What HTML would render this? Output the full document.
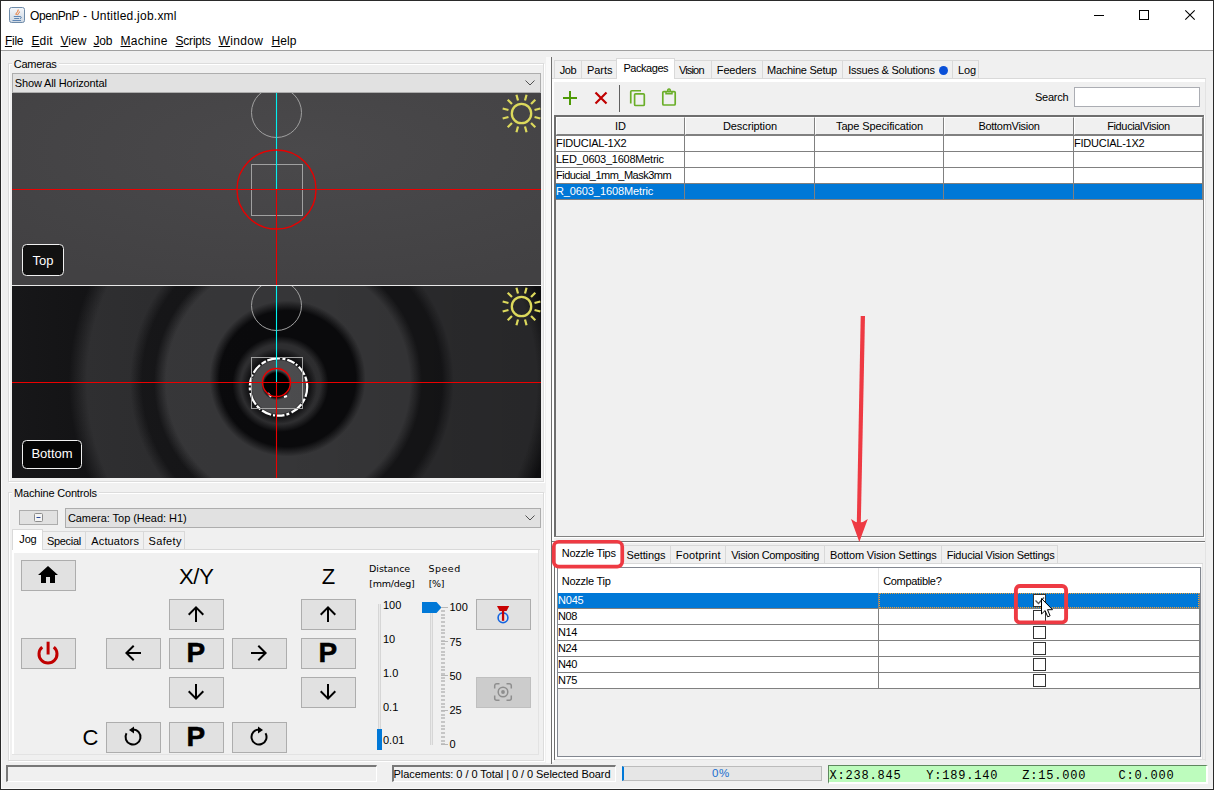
<!DOCTYPE html>
<html>
<head>
<meta charset="utf-8">
<title>OpenPnP - Untitled.job.xml</title>
<style>
html,body{margin:0;padding:0;}
body{width:1214px;height:790px;overflow:hidden;background:#262626;font-family:"Liberation Sans",sans-serif;font-size:11px;color:#000;position:relative;}
.a{position:absolute;box-sizing:border-box;}
.t{position:absolute;white-space:nowrap;line-height:14px;font-size:11px;}
#win{left:0;top:0;width:1214px;height:790px;border:1px solid #2a2a2a;background:#f0f0f0;box-shadow:inset 1px -1px 0 #fafafa;}
.menu{font-size:12px;line-height:16px;top:33px;}
.menu u{text-decoration:underline;text-underline-offset:1px;}
.grp{border:1px solid #dcdcdc;box-shadow:inset 1px 1px 0 #fff, 1px 1px 0 #fff;}
.combo{background:#e1e1e1;border:1px solid #adadad;}
.btn{background:#e1e1e1;border:1px solid #adadad;}
.tab{background:#f0f0f0;border:1px solid #d9d9d9;border-bottom:none;height:18px;}
.tabsel{background:#fff;border:1px solid #d9d9d9;border-bottom:none;height:21px;}
.cell{border-right:1px solid #808080;border-bottom:1px solid #808080;background:#fff;}
.pk{font-size:28px;line-height:32px;font-weight:bold;-webkit-text-stroke:0.5px #000;}
.sm{font-size:9.5px;font-family:"DejaVu Sans","Liberation Sans",sans-serif;}
.mono{font-family:"Liberation Mono",monospace;font-size:12px;letter-spacing:0.800px;line-height:16px;white-space:pre;}
.hd{height:18px;background:#f0f0f0;border:1px solid #808080;border-top-color:#fff;border-left-color:#fff;text-align:center;line-height:16px;font-size:11px;}
.rw{height:15px;background:#fff;line-height:15px;font-size:11px;white-space:nowrap;overflow:hidden;}
.sel{background:#0078d7;color:#fff;}
.cb{width:13px;height:13px;background:#fff;border:1px solid #333;}
</style>
</head>
<body>
<div class="a" id="win"></div>

<!-- title bar -->
<div class="a" style="left:1px;top:1px;width:1212px;height:50px;background:#fff;"></div>
<div class="a" style="left:1px;top:50px;width:1212px;height:1px;background:#a0a0a0;"></div>
<svg class="a" style="left:9px;top:7px;" width="16" height="16" viewBox="0 0 16 16">
 <defs><linearGradient id="jg" x1="0" y1="0" x2="0" y2="1"><stop offset="0" stop-color="#f4f7fb"/><stop offset="1" stop-color="#cdd7e2"/></linearGradient></defs>
 <rect x="0.5" y="0.5" width="15" height="15" rx="2" fill="url(#jg)" stroke="#6e8ba9"/>
 <path d="M7.200 8c-1.200-1.800 2.300-2.800 2-5.400M8.800 8.200c-0.600-1.300 1.800-2.200 1.700-3.600" fill="none" stroke="#ea6a1e" stroke-width="1"/>
 <path d="M4.800 9.500h6.200c1.800 0 1.800 2 0 2M5.200 11.500h5" stroke="#5f86b4" stroke-width="1" fill="none"/>
 <path d="M3.500 13.500h8.500" stroke="#5f86b4" stroke-width="1"/>
</svg>
<div class="t" style="left:30.0px;top:7px;font-size:12px;line-height:18px;letter-spacing:-0.42px;">OpenPnP</div><div class="t" style="left:83px;top:7px;font-size:12px;line-height:18px;">-</div><div class="t" style="left:90.9px;top:7px;font-size:12px;line-height:18px;letter-spacing:0.24px;">Untitled.job.xml</div>
<!-- window controls -->
<svg class="a" style="left:1080px;top:1px;" width="133" height="29" viewBox="0 0 133 29">
 <path d="M14 14.500h10" stroke="#000" stroke-width="1"/>
 <rect x="59.500" y="9.500" width="9" height="9" fill="none" stroke="#000" stroke-width="1"/>
 <path d="M105.300 9.300l9.400 9.400M114.700 9.300l-9.400 9.400" stroke="#000" stroke-width="1.100"/>
</svg>

<!-- menu -->
<div class="t menu" style="left:4.9px;letter-spacing:-0.25px;"><u>F</u>ile</div>
<div class="t menu" style="left:31.5px;letter-spacing:0.10px;"><u>E</u>dit</div>
<div class="t menu" style="left:60.5px;letter-spacing:0.06px;"><u>V</u>iew</div>
<div class="t menu" style="left:93.5px;letter-spacing:-0.18px;"><u>J</u>ob</div>
<div class="t menu" style="left:120.5px;letter-spacing:0.27px;"><u>M</u>achine</div>
<div class="t menu" style="left:175.5px;letter-spacing:-0.20px;"><u>S</u>cripts</div>
<div class="t menu" style="left:218.5px;letter-spacing:0.36px;"><u>W</u>indow</div>
<div class="t menu" style="left:271.5px;letter-spacing:0.10px;"><u>H</u>elp</div>

<!-- LEFT: cameras group -->
<div class="a grp" style="left:8px;top:63px;width:536px;height:419px;"></div>
<div class="t" style="left:11.8px;top:57px;background:#f0f0f0;padding:0 2px;letter-spacing:-0.27px;">Cameras</div>
<div class="a combo" style="left:12px;top:73px;width:529px;height:20px;"></div>
<div class="t" style="left:14.8px;top:76px;letter-spacing:-0.15px;">Show All Horizontal</div>
<svg class="a" style="left:524px;top:79px;" width="12" height="8" viewBox="0 0 12 8"><path d="M1.5 1.5l4.5 4.5l4.5-4.5" fill="none" stroke="#505050" stroke-width="1"/></svg>

<!-- CAMERAS -->
<svg class="a" id="camtop" style="left:12px;top:93px;" width="529" height="192" viewBox="0 0 529 192">
 <defs><radialGradient id="tg" cx="0.55" cy="0.3" r="0.75"><stop offset="0" stop-color="#4a494b"/><stop offset="1" stop-color="#424143"/></radialGradient></defs><rect width="529" height="192" fill="url(#tg)"/>
 <circle cx="264.5" cy="19.5" r="25" fill="none" stroke="#a0a0a0" stroke-width="1"/>
 <rect x="239.5" y="71.5" width="51" height="51" fill="none" stroke="#a0a0a0" stroke-width="1"/>
 <path d="M264.5 0V96.5" stroke="#00f0f0" stroke-width="1.100"/>
 <path d="M0 96.5H529M264.5 96.5V192" stroke="#ec0000" stroke-width="1.100"/>
 <circle cx="264.5" cy="96.5" r="39.5" fill="none" stroke="#e80000" stroke-width="1.400"/>
 <g transform="translate(509.5,20.5)" stroke="#dcd95c" fill="none" stroke-linecap="butt">
  <circle r="9.700" stroke-width="2.300"/>
  <g stroke-width="2.200">
   <path d="M0 -13.5V-19.5" transform="rotate(15)"/><path d="M0 -13.5V-19.5" transform="rotate(45)"/><path d="M0 -13.5V-19.5" transform="rotate(75)"/>
   <path d="M0 -13.5V-19.5" transform="rotate(105)"/><path d="M0 -13.5V-19.5" transform="rotate(135)"/><path d="M0 -13.5V-19.5" transform="rotate(165)"/>
   <path d="M0 -13.5V-19.5" transform="rotate(195)"/><path d="M0 -13.5V-19.5" transform="rotate(225)"/><path d="M0 -13.5V-19.5" transform="rotate(255)"/>
   <path d="M0 -13.5V-19.5" transform="rotate(285)"/><path d="M0 -13.5V-19.5" transform="rotate(315)"/><path d="M0 -13.5V-19.5" transform="rotate(345)"/>
  </g>
 </g>
 <rect x="10.500" y="151.500" width="41" height="31" rx="4" fill="#111" stroke="#f0f0f0" stroke-width="1"/>
 <text x="31" y="172.200" font-family="Liberation Sans, sans-serif" font-size="13" fill="#fff" text-anchor="middle">Top</text>
</svg>
<div class="a" style="left:12px;top:285px;width:529px;height:1px;background:#e8e8e8;"></div>
<svg class="a" id="cambot" style="left:12px;top:286px;" width="529" height="192" viewBox="0 0 529 192">
 <defs>
  <radialGradient id="d1" cx="300.0" cy="96.0" r="243.0" gradientUnits="userSpaceOnUse"><stop offset="0.926" stop-color="#2c2c2e"/><stop offset="0.963" stop-color="#2c2c2e" stop-opacity="0.5"/><stop offset="1" stop-color="#2c2c2e" stop-opacity="0"/></radialGradient>
  <radialGradient id="d2" cx="280.0" cy="96.0" r="162.0" gradientUnits="userSpaceOnUse"><stop offset="0.926" stop-color="#151517"/><stop offset="0.963" stop-color="#151517" stop-opacity="0.5"/><stop offset="1" stop-color="#151517" stop-opacity="0"/></radialGradient>
  <radialGradient id="d3" cx="276.0" cy="96.0" r="134.0" gradientUnits="userSpaceOnUse"><stop offset="0.910" stop-color="#363638"/><stop offset="0.955" stop-color="#363638" stop-opacity="0.5"/><stop offset="1" stop-color="#363638" stop-opacity="0"/></radialGradient>
  <radialGradient id="d4" cx="275.6" cy="92.6" r="78.0" gradientUnits="userSpaceOnUse"><stop offset="0.872" stop-color="#0a0a0c"/><stop offset="0.936" stop-color="#0a0a0c" stop-opacity="0.5"/><stop offset="1" stop-color="#0a0a0c" stop-opacity="0"/></radialGradient>
  <radialGradient id="d5" cx="268.4" cy="98.0" r="48.0" gradientUnits="userSpaceOnUse"><stop offset="0.833" stop-color="#2e2e30"/><stop offset="0.917" stop-color="#2e2e30" stop-opacity="0.5"/><stop offset="1" stop-color="#2e2e30" stop-opacity="0"/></radialGradient>
  <radialGradient id="d6" cx="267.0" cy="100.0" r="38.0" gradientUnits="userSpaceOnUse"><stop offset="0.789" stop-color="#0e0e10"/><stop offset="0.895" stop-color="#0e0e10" stop-opacity="0.5"/><stop offset="1" stop-color="#0e0e10" stop-opacity="0"/></radialGradient>
  <radialGradient id="d7" cx="266.5" cy="101.0" r="29.0" gradientUnits="userSpaceOnUse"><stop offset="0.897" stop-color="#4c4c4e"/><stop offset="0.948" stop-color="#4c4c4e" stop-opacity="0.5"/><stop offset="1" stop-color="#4c4c4e" stop-opacity="0"/></radialGradient>
  <radialGradient id="d8" cx="264.5" cy="99.0" r="15.2" gradientUnits="userSpaceOnUse"><stop offset="0.803" stop-color="#000000"/><stop offset="0.901" stop-color="#000000" stop-opacity="0.5"/><stop offset="1" stop-color="#000000" stop-opacity="0"/></radialGradient>
  <linearGradient id="ov" x1="0" x2="1" y1="0" y2="0"><stop offset="0" stop-color="#fff" stop-opacity="0.030"/><stop offset="0.5" stop-color="#000" stop-opacity="0"/><stop offset="1" stop-color="#000" stop-opacity="0.120"/></linearGradient>
  <filter id="bl05" x="-20%" y="-20%" width="140%" height="140%"><feGaussianBlur stdDeviation="0.400"/></filter>
 </defs>
 <rect width="529" height="192" fill="#101012"/>
 <circle cx="300.0" cy="96.0" r="243.0" fill="url(#d1)"/>
 <circle cx="280.0" cy="96.0" r="162.0" fill="url(#d2)"/>
 <circle cx="276.0" cy="96.0" r="134.0" fill="url(#d3)"/>
 <circle cx="275.6" cy="92.6" r="78.0" fill="url(#d4)"/>
 <circle cx="268.4" cy="98.0" r="48.0" fill="url(#d5)"/>
 <circle cx="267.0" cy="100.0" r="38.0" fill="url(#d6)"/>
 <circle cx="266.5" cy="101.0" r="29.0" fill="url(#d7)"/>
 <circle cx="264.5" cy="99.0" r="15.2" fill="url(#d8)"/>
 <rect width="529" height="192" fill="url(#ov)"/>
 <circle cx="266.500" cy="101" r="28.700" fill="none" stroke="#fff" stroke-width="2.200" stroke-dasharray="10 2 5 1.500 13 2.500 3 2 8 1.500 2 2" filter="url(#bl05)"/>
 <path d="M256 107l3 4M272 111l3-1" stroke="#fff" stroke-width="2" fill="none"/>
 <circle cx="264.5" cy="19.5" r="25" fill="none" stroke="#a0a0a0" stroke-width="1"/>
 <rect x="239.5" y="71.5" width="51" height="51" fill="none" stroke="#a0a0a0" stroke-width="1"/>
 <path d="M264.5 0V96.5" stroke="#00f0f0" stroke-width="1.100"/>
 <path d="M0 96.5H529M264.5 96.5V192" stroke="#ec0000" stroke-width="1.100"/>
 <circle cx="264.5" cy="96.5" r="14" fill="none" stroke="#e80000" stroke-width="1.400"/>
 <g transform="translate(509.5,20.5)" stroke="#dcd95c" fill="none">
  <circle r="9.700" stroke-width="2.300"/>
  <g stroke-width="2.200">
   <path d="M0 -13.5V-19.5" transform="rotate(15)"/><path d="M0 -13.5V-19.5" transform="rotate(45)"/><path d="M0 -13.5V-19.5" transform="rotate(75)"/>
   <path d="M0 -13.5V-19.5" transform="rotate(105)"/><path d="M0 -13.5V-19.5" transform="rotate(135)"/><path d="M0 -13.5V-19.5" transform="rotate(165)"/>
   <path d="M0 -13.5V-19.5" transform="rotate(195)"/><path d="M0 -13.5V-19.5" transform="rotate(225)"/><path d="M0 -13.5V-19.5" transform="rotate(255)"/>
   <path d="M0 -13.5V-19.5" transform="rotate(285)"/><path d="M0 -13.5V-19.5" transform="rotate(315)"/><path d="M0 -13.5V-19.5" transform="rotate(345)"/>
  </g>
 </g>
 <rect x="10.500" y="154.500" width="59" height="28" rx="4" fill="#050505" stroke="#f0f0f0" stroke-width="1"/>
 <text x="40" y="172" font-family="Liberation Sans, sans-serif" font-size="13" fill="#fff" text-anchor="middle">Bottom</text>
</svg>

<!-- MACHINE CONTROLS -->
<div class="a grp" style="left:8px;top:492px;width:536px;height:269px;"></div>
<div class="t" style="left:12.0px;top:486px;background:#f0f0f0;padding:0 2px;letter-spacing:-0.18px;">Machine Controls</div>
<div class="a btn" style="left:19px;top:510px;width:39px;height:15px;"></div>
<svg class="a" style="left:34px;top:513px;" width="9" height="9" viewBox="0 0 9 9"><rect x="0.5" y="0.5" width="8" height="8" rx="1" fill="#f4f4f4" stroke="#8c8c8c"/><path d="M2.5 4.5h4" stroke="#2a4a9a" stroke-width="1"/></svg>
<div class="a combo" style="left:65px;top:508px;width:476px;height:20px;"></div>
<div class="t" style="left:67.9px;top:511px;letter-spacing:-0.04px;">Camera: Top (Head: H1)</div>
<svg class="a" style="left:524px;top:514px;" width="12" height="8" viewBox="0 0 12 8"><path d="M1.5 1.5l4.5 4.5l4.500-4.5" fill="none" stroke="#505050" stroke-width="1"/></svg>
<!-- jog tabs -->
<div class="a" style="left:12px;top:549px;width:528px;height:1px;background:#d9d9d9;"></div>
<div class="a" style="left:12px;top:550px;width:527px;height:3px;background:#fff;"></div>
<div class="a" style="left:12px;top:550px;width:2px;height:205px;background:#fff;"></div>
<div class="a" style="left:538px;top:550px;width:1px;height:205px;background:#e3e3e3;"></div>
<div class="a" style="left:12px;top:754px;width:527px;height:1px;background:#e3e3e3;"></div>
<div class="a tab" style="left:42px;top:531px;width:44px;"></div>
<div class="a tab" style="left:85px;top:531px;width:59px;"></div>
<div class="a tab" style="left:143px;top:531px;width:42px;"></div>
<div class="a tabsel" style="left:12px;top:529px;width:31px;height:21px;"></div>
<div class="t" style="left:19.3px;top:532px;letter-spacing:-0.17px;">Jog</div>
<div class="t" style="left:46.9px;top:534px;letter-spacing:-0.30px;">Special</div>
<div class="t" style="left:91.3px;top:534px;letter-spacing:0.14px;">Actuators</div>
<div class="t" style="left:148.6px;top:534px;letter-spacing:0.32px;">Safety</div>
<!-- jog buttons -->
<div class="a btn" style="left:21px;top:560px;width:55px;height:31px;"></div>
<div class="a btn" style="left:21px;top:638px;width:55px;height:31px;"></div>
<div class="a btn" style="left:169px;top:599px;width:55px;height:31px;"></div>
<div class="a btn" style="left:106px;top:638px;width:55px;height:31px;"></div>
<div class="a btn" style="left:169px;top:638px;width:55px;height:31px;"></div>
<div class="a btn" style="left:232px;top:638px;width:55px;height:31px;"></div>
<div class="a btn" style="left:169px;top:677px;width:55px;height:31px;"></div>
<div class="a btn" style="left:106px;top:722px;width:55px;height:31px;"></div>
<div class="a btn" style="left:169px;top:722px;width:55px;height:31px;"></div>
<div class="a btn" style="left:232px;top:722px;width:55px;height:31px;"></div>
<div class="a btn" style="left:301px;top:599px;width:55px;height:31px;"></div>
<div class="a btn" style="left:301px;top:638px;width:55px;height:31px;"></div>
<div class="a btn" style="left:301px;top:677px;width:55px;height:31px;"></div>
<div class="a btn" style="left:476px;top:599px;width:55px;height:31px;"></div>
<div class="a" style="left:476px;top:677px;width:55px;height:31px;background:#cccccc;border:1px solid #bfbfbf;"></div>
<!-- labels -->
<div class="t" style="left:179px;top:564.500px;font-size:22px;line-height:24px;letter-spacing:-0.300px;">X/Y</div>
<div class="t" style="left:321.700px;top:564.500px;font-size:22px;line-height:24px;">Z</div>
<div class="t" style="left:82.500px;top:726px;font-size:22px;line-height:24px;">C</div>
<div class="t pk" style="left:186.500px;top:637px;">P</div>
<div class="t pk" style="left:186.500px;top:721px;">P</div>
<div class="t pk" style="left:318.500px;top:637px;">P</div>
<!-- icons -->
<svg class="a" style="left:36px;top:563px;" width="24" height="24" viewBox="0 0 24 24"><path d="M10 20v-6h4v6h5v-8h3L12 3 2 12h3v8z" fill="#000"/></svg>
<svg class="a" style="left:36px;top:641px;" width="24" height="24" viewBox="0 0 24 24" fill="none" stroke="#c00000"><path d="M17.790 6.100A9 9 0 1 1 6.210 6.100" stroke-width="3"/><path d="M12.100 0.700V13.500" stroke-width="3"/></svg>
<svg class="a" style="left:184px;top:602px;" width="24" height="24" viewBox="0 0 24 24"><path d="M4 12l1.410 1.410L11 7.830V20h2V7.830l5.580 5.590L20 12l-8-8-8 8z" fill="#000"/></svg>
<svg class="a" style="left:316px;top:602px;" width="24" height="24" viewBox="0 0 24 24"><path d="M4 12l1.410 1.410L11 7.830V20h2V7.830l5.580 5.590L20 12l-8-8-8 8z" fill="#000"/></svg>
<svg class="a" style="left:184px;top:680px;" width="24" height="24" viewBox="0 0 24 24"><path d="M20 12l-1.410-1.410L13 16.170V4h-2v12.170l-5.580-5.590L4 12l8 8 8-8z" fill="#000"/></svg>
<svg class="a" style="left:316px;top:680px;" width="24" height="24" viewBox="0 0 24 24"><path d="M20 12l-1.410-1.410L13 16.170V4h-2v12.170l-5.580-5.590L4 12l8 8 8-8z" fill="#000"/></svg>
<svg class="a" style="left:121px;top:641px;" width="24" height="24" viewBox="0 0 24 24"><path d="M20 11H7.830l5.590-5.590L12 4l-8 8 8 8 1.410-1.410L7.830 13H20v-2z" fill="#000"/></svg>
<svg class="a" style="left:247px;top:641px;" width="24" height="24" viewBox="0 0 24 24"><path d="M12 4l-1.410 1.410L16.170 11H4v2h12.170l-5.580 5.590L12 20l8-8z" fill="#000"/></svg>
<svg class="a" style="left:121.300px;top:725.300px;" width="24" height="24" viewBox="0 0 24 24"><path d="M12 4.500A7.500 7.500 0 1 1 5.500 8.250" fill="none" stroke="#000" stroke-width="2"/><path d="M13 1.600L8 5L13 8.400z" fill="#000"/></svg>
<svg class="a" style="left:246.600px;top:725.300px;" width="24" height="24" viewBox="0 0 24 24"><path d="M12 4.500A7.500 7.500 0 1 0 18.500 8.250" fill="none" stroke="#000" stroke-width="2"/><path d="M11 1.600L16 5L11 8.400z" fill="#000"/></svg>
<!-- nozzle/park icon -->
<svg class="a" style="left:491px;top:603px;" width="24" height="24" viewBox="0 0 24 24"><circle cx="12" cy="14.800" r="4.900" fill="none" stroke="#1464e0" stroke-width="1.600"/><path d="M6 2.900h12.200l-2.600 5.100h-7z" fill="#c80000"/><path d="M12.050 8v9.800" stroke="#c80000" stroke-width="2.300"/></svg>
<svg class="a" style="left:491px;top:680px;" width="24" height="24" viewBox="0 0 24 24" fill="none" stroke="#8e8e8e" stroke-width="1.500"><path d="M3.700 8.500V5.700a2 2 0 0 1 2-2h2.800M15.500 3.700h2.800a2 2 0 0 1 2 2v2.800M20.300 15.500v2.800a2 2 0 0 1-2 2h-2.800M8.500 20.300H5.700a2 2 0 0 1-2-2v-2.800"/><circle cx="12" cy="12" r="4.800"/><circle cx="12" cy="12" r="1.900" fill="#8e8e8e" stroke="none"/></svg>
<!-- distance slider -->
<div class="t sm" style="left:369.1px;top:562px;letter-spacing:-0.06px;">Distance</div>
<div class="t sm" style="left:369.3px;top:576.500px;letter-spacing:-0.23px;">[mm/deg]</div>
<div class="t sm" style="left:428.5px;top:562px;letter-spacing:0.48px;">Speed</div>
<div class="t sm" style="left:428.8px;top:576.500px;letter-spacing:-0.38px;">[%]</div>
<div class="a" style="left:378px;top:604px;width:3px;height:142px;background:#e9e9e9;border:1px solid #d6d6d6;border-width:0 1px;"></div>
<div class="a" style="left:377px;top:729px;width:5px;height:21px;background:#0078d7;"></div>
<div class="t" style="left:383px;top:598px;">100</div>
<div class="t" style="left:383px;top:632px;">10</div>
<div class="t" style="left:383px;top:666px;">1.0</div>
<div class="t" style="left:383px;top:700px;">0.1</div>
<div class="t" style="left:383px;top:733px;">0.01</div>
<!-- speed slider -->
<div class="a" style="left:430px;top:611px;width:3px;height:134px;background:#e9e9e9;border:1px solid #d6d6d6;border-width:0 1px;"></div>
<svg class="a" style="left:421px;top:601px;" width="21" height="13" viewBox="0 0 21 13"><path d="M1 1h14.500l5 5.500l-5 5.500H1z" fill="#0078d7"/></svg>
<div class="a" style="left:441px;top:610px;width:4px;height:134px;background:repeating-linear-gradient(180deg,#c6c6c6 0,#c6c6c6 2px,transparent 2px,transparent 3.700px);"></div>
<div class="a" style="left:441px;top:607px;width:7px;height:1px;background:#b8b8b8;"></div>
<div class="a" style="left:441px;top:641px;width:7px;height:1px;background:#b8b8b8;"></div>
<div class="a" style="left:441px;top:675px;width:7px;height:1px;background:#b8b8b8;"></div>
<div class="a" style="left:441px;top:710px;width:7px;height:1px;background:#b8b8b8;"></div>
<div class="a" style="left:441px;top:744px;width:7px;height:1px;background:#b8b8b8;"></div>
<div class="t" style="left:449.500px;top:600px;">100</div>
<div class="t" style="left:449.500px;top:635px;">75</div>
<div class="t" style="left:449.500px;top:669px;">50</div>
<div class="t" style="left:449.500px;top:703px;">25</div>
<div class="t" style="left:449.500px;top:737px;">0</div>

<!-- STATUS BAR -->
<div class="a" style="left:6px;top:765px;width:371px;height:17px;border:1px solid #fff;border-top:2px solid #787878;border-left:2px solid #787878;"></div>
<div class="a" style="left:392px;top:765px;width:224px;height:17px;border:1px solid #fff;border-top:2px solid #787878;border-left:2px solid #787878;"></div>
<div class="t" style="left:393.5px;top:767px;letter-spacing:-0.06px;">Placements: 0 / 0 Total | 0 / 0 Selected Board</div>
<div class="a" style="left:622px;top:766px;width:200px;height:15px;background:#e6e6e6;border:1px solid #bcbcbc;border-left:2px solid #0078d7;"></div>
<div class="t" style="left:712px;top:765.500px;color:#1a6fd0;font-size:11.500px;letter-spacing:0.500px;">0%</div>
<div class="a" style="left:828px;top:765px;width:380px;height:19px;background:#bdfcbd;border:2px solid #fff;border-top:1px solid #5f875f;border-left:1px solid #5f875f;"></div>
<div class="t mono" style="left:829.500px;top:767.500px;">X:238.845</div><div class="t mono" style="left:926.300px;top:767.500px;">Y:189.140</div><div class="t mono" style="left:1022.300px;top:767.500px;">Z:15.000</div><div class="t mono" style="left:1118.400px;top:767.500px;">C:0.000</div>
<!-- END LEFT -->
<!-- RIGHT PANEL -->
<div class="a" style="left:546px;top:57px;width:5px;height:706px;background:#f9f9f9;"></div>
<div class="a" style="left:554px;top:541px;width:1px;height:219px;background:#6e6e6e;"></div>
<div class="a" style="left:551px;top:57px;width:1px;height:707px;background:#6e6e6e;"></div>
<div class="a" style="left:552px;top:79px;width:2px;height:683px;background:#fff;"></div>
<!-- top tabs -->
<div class="a" style="left:552px;top:78px;width:654px;height:1px;background:#d9d9d9;"></div>
<div class="a" style="left:552px;top:79px;width:653px;height:3px;background:#fff;"></div>
<div class="a" style="left:1205px;top:79px;width:1px;height:682px;background:#e3e3e3;"></div>
<div class="a tab" style="left:554px;top:60px;width:28px;"></div>
<div class="a tab" style="left:581px;top:60px;width:36px;"></div>
<div class="a tab" style="left:674px;top:60px;width:38px;"></div>
<div class="a tab" style="left:711px;top:60px;width:52px;"></div>
<div class="a tab" style="left:762px;top:60px;width:81px;"></div>
<div class="a tab" style="left:842px;top:60px;width:111px;"></div>
<div class="a tab" style="left:952px;top:60px;width:27px;"></div>
<div class="a tabsel" style="left:616px;top:58px;width:59px;height:21px;"></div>
<div class="t" style="left:559.7px;top:63px;letter-spacing:-0.38px;">Job</div>
<div class="t" style="left:586.9px;top:63px;letter-spacing:-0.02px;">Parts</div>
<div class="t" style="left:623.4px;top:61px;letter-spacing:-0.44px;">Packages</div>
<div class="t" style="left:678.9px;top:63px;letter-spacing:-0.83px;">Vision</div>
<div class="t" style="left:716.8px;top:63px;letter-spacing:-0.13px;">Feeders</div>
<div class="t" style="left:767.0px;top:63px;letter-spacing:-0.27px;">Machine Setup</div>
<div class="t" style="left:848.2px;top:63px;letter-spacing:-0.22px;">Issues &amp; Solutions</div>
<div class="a" style="left:939px;top:66px;width:9px;height:9px;border-radius:50%;background:#0a50d8;"></div>
<div class="t" style="left:958.0px;top:63px;letter-spacing:-0.18px;">Log</div>
<!-- toolbar -->
<svg class="a" style="left:556px;top:82px;" width="130" height="32" viewBox="0 0 130 32">
 <path d="M14 9v14M7 16h14" stroke="#4e9a06" stroke-width="2" fill="none"/>
 <path d="M39.500 10.500l11 11M50.500 10.500l-11 11" stroke="#c00000" stroke-width="2.200" fill="none"/>
 <path d="M63.500 3v27" stroke="#606060" stroke-width="1"/>
 <path d="M85 8.750h-9.250a1 1 0 0 0-1 1V21.500" stroke="#6aae28" stroke-width="1.700" fill="none"/>
 <rect x="78.600" y="11.800" width="9.700" height="11.700" rx="1" stroke="#6aae28" stroke-width="1.700" fill="none"/>
 <rect x="106.800" y="9.600" width="12.400" height="13.400" rx="1" stroke="#6aae28" stroke-width="1.700" fill="none"/>
 <path d="M110 9.500v2.300h6V9.500M113 9.500a1.300 1.300 0 1 1 0.010 0z" stroke="#6aae28" stroke-width="1.500" fill="none"/>
</svg>
<div class="t" style="left:1035.0px;top:90px;letter-spacing:-0.27px;">Search</div>
<div class="a" style="left:1074px;top:87px;width:126px;height:20px;background:#fff;border:1px solid #abadb3;"></div>
<!-- packages table -->
<div class="a" style="left:554px;top:115px;width:651px;height:423px;border:1px solid #fff;border-top:none;border-left:none;"></div><div class="a" style="left:554px;top:115px;width:650px;height:422px;border:2px solid #6e6e6e;border-right:1px solid #828282;border-bottom:1px solid #828282;background:#f0f0f0;"></div>
<div class="a" id="pkgt" style="left:556px;top:117px;width:647px;height:83px;background:#808080;"></div>
<div class="a hd" style="left:556px;top:117px;width:129px;">ID</div>
<div class="a hd" style="left:685px;top:117px;width:130px;letter-spacing:-0.09px;">Description</div>
<div class="a hd" style="left:815px;top:117px;width:129px;letter-spacing:-0.13px;">Tape Specification</div>
<div class="a hd" style="left:944px;top:117px;width:130px;letter-spacing:-0.28px;">BottomVision</div>
<div class="a hd" style="left:1074px;top:117px;width:129px;letter-spacing:-0.36px;">FiducialVision</div>
<div class="a rw" style="left:556px;top:136px;width:128px;letter-spacing:-0.24px;">FIDUCIAL-1X2</div><div class="a rw" style="left:685px;top:136px;width:129px;"></div><div class="a rw" style="left:815px;top:136px;width:128px;"></div><div class="a rw" style="left:944px;top:136px;width:129px;"></div><div class="a rw" style="left:1074px;top:136px;width:128px;letter-spacing:-0.24px;">FIDUCIAL-1X2</div>
<div class="a rw" style="left:556px;top:152px;width:128px;letter-spacing:-0.25px;">LED_0603_1608Metric</div><div class="a rw" style="left:685px;top:152px;width:129px;"></div><div class="a rw" style="left:815px;top:152px;width:128px;"></div><div class="a rw" style="left:944px;top:152px;width:129px;"></div><div class="a rw" style="left:1074px;top:152px;width:128px;"></div>
<div class="a rw" style="left:556px;top:168px;width:128px;letter-spacing:-0.51px;">Fiducial_1mm_Mask3mm</div><div class="a rw" style="left:685px;top:168px;width:129px;"></div><div class="a rw" style="left:815px;top:168px;width:128px;"></div><div class="a rw" style="left:944px;top:168px;width:129px;"></div><div class="a rw" style="left:1074px;top:168px;width:128px;"></div>
<div class="a rw sel" style="left:556px;top:184px;width:128px;letter-spacing:-0.11px;">R_0603_1608Metric</div><div class="a rw sel" style="left:685px;top:184px;width:129px;"></div><div class="a rw sel" style="left:815px;top:184px;width:128px;"></div><div class="a rw sel" style="left:944px;top:184px;width:129px;"></div><div class="a rw sel" style="left:1074px;top:184px;width:128px;"></div>
<!-- divider between -->
<div class="a" style="left:552px;top:541px;width:653px;height:1px;background:#767676;"></div><div class="a" style="left:552px;top:542px;width:653px;height:1px;background:#fff;"></div>
<!-- lower tabs -->
<div class="a" style="left:555px;top:563px;width:648px;height:1px;background:#d9d9d9;"></div><div class="a" style="left:555px;top:564px;width:647px;height:3px;background:#fff;"></div><div class="a" style="left:1202px;top:564px;width:1px;height:195px;background:#e3e3e3;"></div><div class="a" style="left:555px;top:564px;width:2px;height:195px;background:#fff;"></div>
<div class="a tab" style="left:623px;top:545px;width:48px;"></div>
<div class="a tab" style="left:670px;top:545px;width:56px;"></div>
<div class="a tab" style="left:725px;top:545px;width:100px;"></div>
<div class="a tab" style="left:824px;top:545px;width:118px;"></div>
<div class="a tab" style="left:941px;top:545px;width:117px;"></div>
<div class="a tabsel" style="left:555px;top:543px;width:69px;height:21px;"></div>
<div class="t" style="left:561.8px;top:546px;letter-spacing:-0.27px;">Nozzle Tips</div>
<div class="t" style="left:626.4px;top:548px;letter-spacing:-0.09px;">Settings</div>
<div class="t" style="left:675.8px;top:548px;letter-spacing:0.17px;">Footprint</div>
<div class="t" style="left:731.3px;top:548px;letter-spacing:-0.34px;">Vision Compositing</div>
<div class="t" style="left:830.1px;top:548px;letter-spacing:-0.18px;">Bottom Vision Settings</div>
<div class="t" style="left:946.7px;top:548px;letter-spacing:-0.24px;">Fiducial Vision Settings</div>
<!-- nozzle table -->
<div class="a" style="left:557px;top:567px;width:644px;height:190px;border:1px solid #828790;background:#f0f0f0;"></div>
<div class="a" style="left:558px;top:568px;width:642px;height:25px;background:#fff;"></div>
<div class="a" style="left:878px;top:568px;width:1px;height:25px;background:#e5e5e5;"></div>
<div class="t" style="left:561.8px;top:574px;letter-spacing:-0.25px;">Nozzle Tip</div>
<div class="t" style="left:883.2px;top:574px;letter-spacing:-0.32px;">Compatible?</div>
<div class="a" id="nzt" style="left:558px;top:593px;width:642px;height:96px;background:#808080;"></div>
<div class="a rw sel" style="left:558px;top:593px;width:320px;letter-spacing:-0.20px;">N045</div><div class="a rw sel" style="left:879px;top:593px;width:320px;outline:1px dotted #f0a030;outline-offset:-1px;"></div>
<div class="a rw" style="left:558px;top:609px;width:320px;letter-spacing:-0.35px;">N08</div><div class="a rw" style="left:879px;top:609px;width:320px;"></div>
<div class="a rw" style="left:558px;top:625px;width:320px;letter-spacing:-0.35px;">N14</div><div class="a rw" style="left:879px;top:625px;width:320px;"></div>
<div class="a rw" style="left:558px;top:641px;width:320px;letter-spacing:-0.35px;">N24</div><div class="a rw" style="left:879px;top:641px;width:320px;"></div>
<div class="a rw" style="left:558px;top:657px;width:320px;letter-spacing:-0.35px;">N40</div><div class="a rw" style="left:879px;top:657px;width:320px;"></div>
<div class="a rw" style="left:558px;top:673px;width:320px;letter-spacing:-0.35px;">N75</div><div class="a rw" style="left:879px;top:673px;width:320px;"></div>
<div class="a cb" style="left:1033px;top:594px;"></div>
<svg class="a" style="left:1033px;top:594px;" width="13" height="13" viewBox="0 0 13 13"><path d="M2.500 6.500l3 3l5.500-6" fill="none" stroke="#555" stroke-width="1.400"/></svg>
<div class="a cb" style="left:1033px;top:610px;"></div>
<div class="a cb" style="left:1033px;top:626px;"></div>
<div class="a cb" style="left:1033px;top:642px;"></div>
<div class="a cb" style="left:1033px;top:658px;"></div>
<div class="a cb" style="left:1033px;top:674px;"></div>
<div class="a" style="left:555px;top:757px;width:647px;height:2px;background:#fff;"></div><div class="a" style="left:555px;top:759px;width:650px;height:1px;background:#e3e3e3;"></div>
<!-- annotations -->
<svg class="a" style="left:550px;top:538px;" width="78" height="34" viewBox="0 0 78 34"><rect x="3.750" y="3.750" width="68.500" height="24.800" rx="5" fill="none" stroke="#ee3a43" stroke-width="3.700"/></svg>
<svg class="a" style="left:1010px;top:580px;" width="64" height="50" viewBox="0 0 64 50"><rect x="5.900" y="6" width="50.200" height="36.400" rx="4" fill="none" stroke="#ee3a43" stroke-width="3.900"/></svg>
<svg class="a" style="left:840px;top:310px;" width="40" height="236" viewBox="0 0 40 236">
 <path d="M20.700 6L25 6L20.800 214L16.800 214Z" fill="#ee3a43"/>
 <path d="M19.300 232L11 209Q19.300 216 27.800 209Z" fill="#ee3a43"/>
</svg>
<svg class="a" style="left:1040.200px;top:597px;" width="14" height="22" viewBox="0 0 14 22"><path d="M1.500 1.500V17l3.600-3.400l2.600 6.200l2.400-1l-2.600-6.100h5z" fill="#fff" stroke="#000" stroke-width="1"/></svg>

</body>
</html>
